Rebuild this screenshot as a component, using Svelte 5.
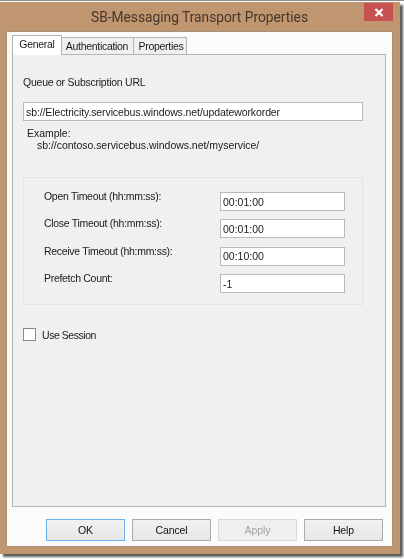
<script>
  const rows = [
    { label: 'Open Timeout (hh:mm:ss):', value: '00:01:00' },
    { label: 'Close Timeout (hh:mm:ss):', value: '00:01:00' },
    { label: 'Receive Timeout (hh:mm:ss):', value: '00:10:00' },
    { label: 'Prefetch Count:', value: '-1' }
  ];
</script>

<div class="screen">
  <div class="window">
    <div class="titlebar">
      <span class="title">SB-Messaging Transport Properties</span>
      <div class="close">
        <svg width="10" height="9" viewBox="0 0 10 9"><path d="M1.5 1 L8.5 8 M8.5 1 L1.5 8" stroke="#fff" stroke-width="2.2" fill="none"/></svg>
      </div>
    </div>
    <div class="client">
      <div class="tabs">
        <div class="tab active">General</div>
        <div class="tab auth">Authentication</div>
        <div class="tab props">Properties</div>
      </div>
      <div class="page">
        <div class="urllabel">Queue or Subscription URL</div>
        <div class="field url">sb://Electricity.servicebus.windows.net/updateworkorder</div>
        <div class="example">Example:</div>
        <div class="example indent">sb://contoso.servicebus.windows.net/myservice/</div>
        <div class="group">
          {#each rows as r}
            <div class="row">
              <span class="rowlabel">{r.label}</span>
              <div class="field small">{r.value}</div>
            </div>
          {/each}
        </div>
        <div class="session">
          <span class="check"></span>
          <span class="sessionlabel">Use Session</span>
        </div>
      </div>
      <div class="buttons">
        <div class="btn default">OK</div>
        <div class="btn">Cancel</div>
        <div class="btn disabled">Apply</div>
        <div class="btn">Help</div>
      </div>
    </div>
  </div>
</div>

<style>
  :global(body) { margin: 0; background: #fff; }
  .screen {
    width: 404px; height: 559px; overflow: hidden; box-sizing: border-box;
    padding-top: 2px;
    background: linear-gradient(#8c8c8c 0 1px, #fff 1px 2px, #fff);
    font-family: "Liberation Sans", Arial, sans-serif;
    font-size: 10.5px; color: #1a1a1a;
    filter: blur(0.35px);
  }
  .window {
    width: 400px; height: 552px; box-sizing: border-box;
    background: #c09670;
    padding: 0 7px 7px 6px;
    display: flex; flex-direction: column;
    box-shadow: 3px 3px 2px #5c5c5c;
  }
  .titlebar {
    height: 29px; flex: none; position: relative;
    display: flex; align-items: center; justify-content: center;
  }
  .title {
    font-family: Roboto, sans-serif; font-size: 13.75px; color: #46362a;
  }
  .close {
    position: absolute; right: 0; top: 1px; width: 29px; height: 18px;
    background: #c75050; display: flex; align-items: center; justify-content: center;
  }
  .client {
    flex: 1; box-sizing: border-box;
    padding: 3px 5px 0 5px; display: flex; flex-direction: column;
    border: 1px solid #fdfdfd;
    outline: 1px solid #a89078; outline-offset: -1px;
    background: #fbfbfb;
  }
  .tabs { display: flex; height: 19px; align-items: flex-end; position: relative; z-index: 1; }
  .tab {
    box-sizing: border-box; border: 1px solid #b4b4b4; border-bottom: none; background: #f0f0f0;
    height: 17px; display: flex; align-items: center; justify-content: center;
    font-size: 10.5px; letter-spacing: -0.3px; margin-left: -1px;
  }
  .tab.active {
    width: 50px; height: 20px; background: #fff; margin-left: 0; margin-bottom: -1px;
    padding-bottom: 3px; z-index: 1;
  }
  .tab.auth { width: 73px; padding-right: 1px; }
  .tab.props { width: 54px; padding-left: 2px; }
  .page {
    flex: none; height: 453px; box-sizing: border-box;
    background: #f0f0f0; border: 1px solid #b4b4b4; width: 374px;
    padding: 21px 0 0 10px;
  }
  .urllabel { line-height: 13px; height: 13px; letter-spacing: -0.24px; }
  .field {
    box-sizing: border-box; background: #fff; border: 1px solid #b9b9b9;
    display: flex; align-items: center; padding-left: 2px;
  }
  .url { width: 340px; height: 19px; margin-top: 13px; margin-bottom: 6px; letter-spacing: -0.1px; }
  .example { padding-left: 4px; line-height: 12px; height: 12px; letter-spacing: -0.03px; }
  .indent { padding-left: 14px; }
  .group {
    width: 340px; height: 128px; box-sizing: border-box; margin-top: 26px;
    border: 1px solid #e3e3e3; padding: 14px 0 0 20px;
  }
  .row { display: flex; justify-content: space-between; height: 27.4px; padding-right: 17px; }
  .rowlabel { line-height: 14px; letter-spacing: -0.3px; margin-top: -3px; }
  .small { width: 125px; height: 19px; }
  .session { display: flex; align-items: center; gap: 6px; margin-top: 23px; height: 13px; }
  .sessionlabel { letter-spacing: -0.45px; }
  .check { width: 13px; height: 13px; box-sizing: border-box; border: 1px solid #8a8a8a; background: #fff; }
  .buttons { display: flex; gap: 7px; padding: 12px 0 0 34px; }
  .btn {
    width: 79px; height: 22px; box-sizing: border-box; border: 1px solid #ababab;
    background: linear-gradient(#f2f2f2, #e6e6e6);
    display: flex; align-items: center; justify-content: center; font-size: 10.5px;
    letter-spacing: -0.1px; color: #111;
  }
  .btn.default { border-color: #6fb0ee; }
  .btn.disabled { color: #a3a3a3; border-color: #d9d9d9; background: #efefef; }
</style>
